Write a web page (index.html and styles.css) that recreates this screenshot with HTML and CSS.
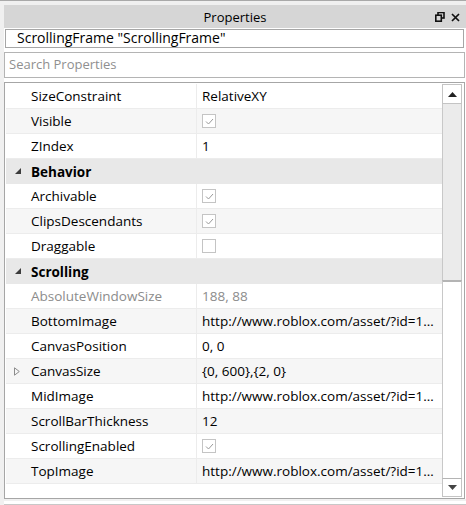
FILE: index.html
```html
<!DOCTYPE html>
<html>
<head>
<meta charset="utf-8">
<link rel="stylesheet" href="styles.css">
</head>
<body>
<div class="panel">
  <div class="topstrip"></div>
  <div class="frame">
    <div class="titlebar">
      <span class="title">Properties</span>
      <span class="tbicons">
        <svg width="10" height="10" viewBox="0 0 10 10"><rect x="3" y="0.5" width="6" height="5.5" fill="none" stroke="#111" stroke-width="1.6"/><rect x="0.8" y="3.2" width="5.5" height="6" fill="#d6d6d6" stroke="#111" stroke-width="1.6"/></svg>
        <svg width="9" height="9" viewBox="0 0 9 9"><path d="M1 1 L8 8 M8 1 L1 8" stroke="#111" stroke-width="1.7"/></svg>
      </span>
    </div>
    <div class="body">
      <div class="objname">ScrollingFrame "ScrollingFrame"</div>
      <div class="search">Search Properties</div>
      <div class="grid">
        <div class="rows">
          <div class="row w"><div class="n">SizeConstraint</div><div class="v">RelativeXY</div></div>
          <div class="row g"><div class="n">Visible</div><div class="v"><span class="cb"><svg width="9" height="7" viewBox="0 0 9 7"><path d="M1 3.5 L3.5 6 L8 1" fill="none" stroke="#9a9a9a" stroke-width="1"/></svg></span></div></div>
          <div class="row w"><div class="n">ZIndex</div><div class="v">1</div></div>
          <div class="cat"><span class="exp"><svg width="6" height="6" viewBox="0 0 6 6"><path d="M6 0 L6 6 L0 6 Z" fill="#3c3c3c"/></svg></span>Behavior</div>
          <div class="row w"><div class="n">Archivable</div><div class="v"><span class="cb"><svg width="9" height="7" viewBox="0 0 9 7"><path d="M1 3.5 L3.5 6 L8 1" fill="none" stroke="#9a9a9a" stroke-width="1"/></svg></span></div></div>
          <div class="row g"><div class="n">ClipsDescendants</div><div class="v"><span class="cb"><svg width="9" height="7" viewBox="0 0 9 7"><path d="M1 3.5 L3.5 6 L8 1" fill="none" stroke="#9a9a9a" stroke-width="1"/></svg></span></div></div>
          <div class="row w"><div class="n">Draggable</div><div class="v"><span class="cb"></span></div></div>
          <div class="cat"><span class="exp"><svg width="6" height="6" viewBox="0 0 6 6"><path d="M6 0 L6 6 L0 6 Z" fill="#3c3c3c"/></svg></span>Scrolling</div>
          <div class="row w dis"><div class="n">AbsoluteWindowSize</div><div class="v">188, 88</div></div>
          <div class="row g"><div class="n">BottomImage</div><div class="v">http://www.roblox.com/asset/?id=1…</div></div>
          <div class="row w"><div class="n">CanvasPosition</div><div class="v">0, 0</div></div>
          <div class="row g"><div class="n"><span class="col"><svg width="6" height="9" viewBox="0 0 6 9"><path d="M0.5 0.8 L5.3 4.5 L0.5 8.2 Z" fill="none" stroke="#8c8c8c" stroke-width="1"/></svg></span>CanvasSize</div><div class="v">{0, 600},{2, 0}</div></div>
          <div class="row w"><div class="n">MidImage</div><div class="v">http://www.roblox.com/asset/?id=1…</div></div>
          <div class="row g"><div class="n">ScrollBarThickness</div><div class="v">12</div></div>
          <div class="row w"><div class="n">ScrollingEnabled</div><div class="v"><span class="cb"><svg width="9" height="7" viewBox="0 0 9 7"><path d="M1 3.5 L3.5 6 L8 1" fill="none" stroke="#9a9a9a" stroke-width="1"/></svg></span></div></div>
          <div class="row g"><div class="n">TopImage</div><div class="v">http://www.roblox.com/asset/?id=1…</div></div>
        </div>
        <div class="sbar">
          <div class="sbtn"><svg width="9" height="5" viewBox="0 0 9 5"><path d="M0 5 L4.5 0 L9 5 Z" fill="#222"/></svg></div>
          <div class="track"></div>
          <div class="thumb"></div>
          <div class="sbtn down"><svg width="9" height="5" viewBox="0 0 9 5"><path d="M0 0 L9 0 L4.5 5 Z" fill="#444"/></svg></div>
        </div>
      </div>
    </div>
  </div>
  <div class="bottomstrip"></div>
</div>
</body>
</html>
```
FILE: styles.css
```css
* { box-sizing: border-box; }
html, body { margin: 0; padding: 0; }
body {
  width: 466px;
  height: 505px;
  overflow: hidden;
  background: #f0f0f0;
  font-family: "Open Sans", "Noto Sans", sans-serif;
  font-size: 13.5px;
  color: #000;
}
.panel { width: 466px; height: 505px; display: flex; flex-direction: column; }
.topstrip { height: 5px; border-top: 1px solid #a9a9a9; background: #f0f0f0; flex: none; }
.frame { margin-left: 4px; flex: none; display: flex; flex-direction: column; }
.titlebar {
  height: 23px;
  background: #d6d6d6;
  display: flex;
  align-items: center;
  justify-content: center;
  position: relative;
  font-size: 13px;
}
.tbicons {
  position: absolute;
  right: 6px;
  top: 7px;
  display: flex;
  gap: 6px;
  align-items: center;
}
.body {
  background: #fff;
  height: 471px;
  display: flex;
  flex-direction: column;
  padding-top: 1px;
}
.objname {
  height: 19px;
  margin: 0 2px 0 1px;
  border: 1px solid #a6a6a6;
  padding-left: 11px;
  line-height: 16px;
  font-size: 14px;
  white-space: nowrap;
}
.search {
  height: 26px;
  margin-top: 4px;
  margin-right: 1px;
  border: 1px solid #b4b4b4;
  padding-left: 4px;
  line-height: 23px;
  color: #8f8f8f;
  font-size: 13px;
}
.grid {
  margin-top: 4px;
  margin-right: 1px;
  height: 417px;
  border: 1px solid #a6a6a6;
  padding: 1px;
  display: flex;
}
.rows { flex: 1; min-width: 0; display: flex; flex-direction: column; }
.row {
  height: 25px;
  display: grid;
  grid-template-columns: 191px 1fr;
  border-bottom: 1px solid #ececec;
  flex: none;
}
.row.w { background: #fff; }
.row.g { background: #f6f6f6; }
.n {
  padding-left: 25px;
  border-right: 1px solid #ececec;
  display: flex;
  align-items: center;
  position: relative;
  white-space: nowrap;
}
.v {
  padding-left: 5px;
  line-height: 24px;
  white-space: nowrap;
  min-width: 0;
}
.dis { color: #8c8c8c; }
.cat {
  height: 25px;
  background: #e8e8e8;
  font-weight: bold;
  display: flex;
  align-items: center;
  padding-left: 25px;
  position: relative;
  flex: none;
  font-size: 13.5px;
}
.exp { position: absolute; left: 9px; top: 9px; display: flex; }
.col { position: absolute; left: 8px; top: 8px; display: flex; }
.cb {
  display: inline-flex;
  vertical-align: middle;
  width: 14px;
  height: 14px;
  border: 1px solid #c4c4c4;
  background: #fff;
  align-items: center;
  justify-content: center;
  margin-top: -2px;
}
.sbar {
  width: 20px;
  flex: none;
  display: flex;
  flex-direction: column;
  margin-right: 1px;
}
.sbtn {
  height: 20px;
  border: 1px solid #c4c4c4;
  background: #fff;
  display: flex;
  align-items: center;
  justify-content: center;
  flex: none;
}
.sbtn.down { height: 19px; border-top: 1px solid #b4b4b4; }
.track {
  height: 176px;
  background: #ebebeb;
  border-left: 1px solid #c8c8c8;
  border-right: 1px solid #c8c8c8;
  flex: none;
}
.thumb {
  flex: 1;
  background: #fff;
  border: 1px solid #c8c8c8;
  border-top: 2px solid #b4b4b4;
  border-bottom: none;
}
.bottomstrip {
  flex: 1;
  margin-left: 4px;
  border-top: 2px solid #f0f0f0;
  background: #fff;
  border-bottom: 1px solid #c8c8c8;
}
```
